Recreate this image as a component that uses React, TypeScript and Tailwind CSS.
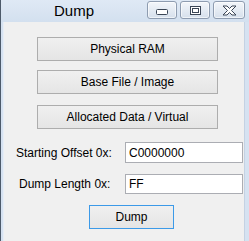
import React from 'react';

const font = { fontFamily: '"Liberation Sans", Arial, sans-serif' };

const CaptionButton = ({ wide, children }: { wide?: boolean; children: React.ReactNode }) => (
  <div
    className={`${wide ? 'w-[32px]' : 'w-[30px]'} h-[18px] rounded-[3px] border border-[#8e9cb0] bg-gradient-to-b from-[#f3f6fa] to-[#d6e0ec] flex items-center justify-center shadow-[inset_0_0_0_1px_rgba(255,255,255,0.6)]`}
  >
    {children}
  </div>
);

const WinButton = ({ label, className = '' }: { label: string; className?: string }) => (
  <button
    className={`h-[24px] border border-[#adadad] bg-gradient-to-b from-[#f0f0f0] to-[#e5e5e5] text-[12px] text-black leading-none ${className}`}
    style={font}
  >
    {label}
  </button>
);

export default function App() {
  return (
    <div className="w-[249px] h-[241px] flex flex-col bg-[#d6e2f1] overflow-hidden" style={font}>
      {/* Title bar */}
      <div className="h-[22px] flex border-l border-[#4d5a6a] bg-gradient-to-b from-[#dfe9f5] to-[#d3e0ef]">
        <div className="w-[146px] flex items-start justify-center pt-[2px]">
          <span className="text-[15px] leading-[18px] text-black">Dump</span>
        </div>
        <div className="flex gap-[3px] pt-[1px]">
          <CaptionButton>
            <svg width="12" height="6" viewBox="0 0 12 6" className="mt-[4px]">
              <rect x="0.5" y="0.5" width="11" height="5" rx="1" fill="#fff" stroke="#3b4656" />
            </svg>
          </CaptionButton>
          <CaptionButton>
            <svg width="11" height="9" viewBox="0 0 11 9">
              <rect x="0.5" y="0.5" width="10" height="8" fill="#fff" stroke="#3b4656" />
              <rect x="2.5" y="2.5" width="6" height="4" fill="#fff" stroke="#3b4656" />
            </svg>
          </CaptionButton>
          <CaptionButton wide>
            <svg width="15" height="11" viewBox="0 0 15 11">
              <path
                d="M1 1h4l2.5 2.5L10 1h4l-4.5 4.5L14 10h-4L7.5 7.5 5 10H1l4.5-4.5z"
                fill="#fff"
                stroke="#3b4656"
                strokeLinejoin="round"
              />
            </svg>
          </CaptionButton>
        </div>
      </div>

      {/* Body with frame */}
      <div className="flex-1 flex">
        <div className="w-[3px] border-l border-[#4d5a6a] bg-[#d6e2f1]" />
        <div className="w-[241px] bg-[#f0f0f0] border-l border-[#e6edf6] flex flex-col pt-[15px]">
          <WinButton label="Physical RAM" className="ml-[33px] w-[181px]" />
          <WinButton label="Base File / Image" className="ml-[33px] w-[181px] mt-[9px]" />
          <WinButton label="Allocated Data / Virtual" className="ml-[33px] w-[181px] mt-[11px]" />

          <div className="flex items-center h-[21px] mt-[13px]">
            <span className="w-[121px] pl-[12px] text-[12px] text-black">Starting Offset 0x:</span>
            <input
              readOnly
              value="C0000000"
              className="w-[118px] h-[21px] border border-[#abadb3] bg-white px-[3px] text-[12px] text-black outline-none"
              style={font}
            />
          </div>
          <div className="flex items-center h-[20px] mt-[11px]">
            <span className="w-[121px] pl-[15px] text-[12px] text-black">Dump Length 0x:</span>
            <input
              readOnly
              value="FF"
              className="w-[118px] h-[20px] border border-[#abadb3] bg-white px-[3px] text-[12px] text-black outline-none"
              style={font}
            />
          </div>

          <WinButton
            label="Dump"
            className="ml-[85px] w-[85px] mt-[11px] !border-[#3c9ae8]"
          />
        </div>
        <div className="flex-1 border-l border-[#c4d2e3] bg-[#d6e2f1]" />
      </div>
    </div>
  );
}
